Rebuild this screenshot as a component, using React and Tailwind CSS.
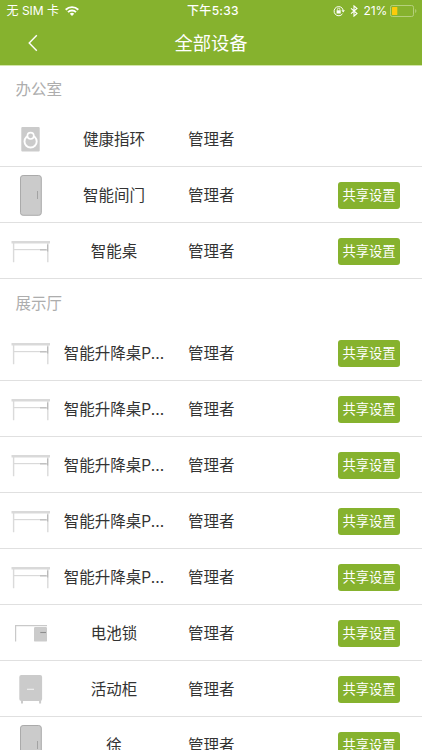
import React from "react";

function Art({ type }) {
  return (
    <svg viewBox="0 0 60 55" className="h-[55px] w-[60px] shrink-0 self-start" fill="none">
      {type === "ring" && (
        <>
          <rect x="21.3" y="16" width="18.4" height="24.5" rx="1" fill="#cbcbcb" />
          <circle cx="30.6" cy="30.4" r="6.1" stroke="#fff" strokeWidth="1.9" />
          <circle cx="30.6" cy="24.8" r="3.2" fill="#cbcbcb" stroke="#fff" strokeWidth="1.6" />
        </>
      )}
      {type === "door" && (
        <>
          <rect x="20.5" y="8.5" width="20.8" height="39.8" rx="2.6" fill="#cbcbcb" stroke="#aaa" />
          <path d="M37.5 24v8" stroke="#a3a3a3" />
        </>
      )}
      {type === "desk" && (
        <>
          <path d="M11.5 19.2H50" stroke="#d9d9d9" strokeWidth="2.6" />
          <path d="M13.6 20v19.2M47.8 20v19.2" stroke="#dadada" strokeWidth="1.4" />
          <path d="M14 26.6h32" stroke="#d9d9d9" strokeWidth="1.2" />
          <path d="M40 26.9h7M47.7 21.5v7" stroke="#b2b2b2" />
        </>
      )}
      {type === "lock" && (
        <>
          <path d="M15.6 36.6V20.6H47" stroke="#c9c9c9" strokeWidth="1.2" />
          <rect x="34" y="22" width="13" height="14.6" rx="1.2" fill="#cbcbcb" />
          <path d="M40.3 27.5H46" stroke="#8d8d8d" strokeWidth="1.1" />
        </>
      )}
      {type === "cabinet" && (
        <>
          <path d="M22 39v3.6M40.1 39v3.6" stroke="#cbcbcb" strokeWidth="2" />
          <rect x="19.3" y="14" width="22.8" height="26" rx="2" fill="#cbcbcb" />
          <path d="M27 28.3h7" stroke="#efefef" strokeWidth="1.2" />
        </>
      )}
    </svg>
  );
}

function Row({ type, name, share = true }) {
  return (
    <div className="flex h-14 items-center border-b border-[#e0e0e0]">
      <Art type={type} />
      <div className="w-[108px] pt-[2px] text-center whitespace-nowrap">{name}</div>
      <div className="ml-5 flex-1 pt-[2px]">管理者</div>
      {share && (
        <button className="mt-[2px] mr-[22px] flex h-[27px] w-[62px] items-center justify-center rounded-[3px] bg-[#86b22e] text-[13.3px] whitespace-nowrap text-white">
          共享设置
        </button>
      )}
    </div>
  );
}

function Group({ title, items, titleHeight }) {
  return (
    <section>
      <h2 className={`${titleHeight} flex items-center pt-[3px] pl-[15.5px] text-[#adadad]`}>{title}</h2>
      {items.map((item, i) => (
        <Row key={i} {...item} />
      ))}
    </section>
  );
}

function StatusBar() {
  return (
    <div className="grid h-[21px] grid-cols-3 items-center text-[12px] leading-none">
      <div className="flex items-center gap-[6px] pl-[6.5px]">
        <span className="whitespace-nowrap">无 SIM 卡</span>
        <svg viewBox="0 0 14 10" className="h-[10px] w-[14px]" fill="none" stroke="#fff" strokeWidth="1.9">
          <path d="M.7 3.7a9 9 0 0 1 12.6 0M3 6.1a5.7 5.7 0 0 1 8 0" />
          <path d="M7 10 4.8 7.8a3.1 3.1 0 0 1 4.4 0Z" fill="#fff" stroke="none" />
        </svg>
      </div>
      <div className="pl-[4px] text-center font-medium whitespace-nowrap tracking-[0.3px]">下午5:33</div>
      <div className="flex items-center justify-end pr-[5px]">
        <svg viewBox="0 0 12 12" className="mr-[5px] h-[12px] w-[12px]" fill="none" stroke="#fff">
          <path d="M9.5 8.8A4.6 4.6 0 1 1 10.2 5.2" />
          <path d="M8.4 5.3h3.5l-1.7 2.3Z" fill="#fff" stroke="none" />
          <rect x="3.6" y="5.3" width="4.1" height="3.2" fill="#fff" stroke="none" />
          <path d="M4.4 5.5V4.4a1.25 1.25 0 0 1 2.5 0v1.1" strokeWidth=".8" />
        </svg>
        <svg viewBox="0 0 8 12" className="mr-[6px] h-[12px] w-[8px]" fill="none" stroke="#fff" strokeWidth="1.1">
          <path d="m1 3.3 6 5.2-3 2.6V.9l3 2.6-6 5.2" />
        </svg>
        <span className="mr-[3px] tracking-[-0.2px]">21%</span>
        <svg viewBox="0 0 27 12" className="h-[12px] w-[27px]" fill="none">
          <rect x=".5" y=".5" width="23" height="11" rx="1.8" stroke="#b5d07c" />
          <rect x="2" y="2" width="5.3" height="8" rx=".5" fill="#fdcb0a" />
          <path d="M25.2 4v4q1.2-.5 1.2-2t-1.2-2Z" fill="#b5d07c" />
        </svg>
      </div>
    </div>
  );
}

const office = [
  { type: "ring", name: "健康指环", share: false },
  { type: "door", name: "智能间门" },
  { type: "desk", name: "智能桌" },
];

const hall = [
  { type: "desk", name: "智能升降桌P..." },
  { type: "desk", name: "智能升降桌P..." },
  { type: "desk", name: "智能升降桌P..." },
  { type: "desk", name: "智能升降桌P..." },
  { type: "desk", name: "智能升降桌P..." },
  { type: "lock", name: "电池锁" },
  { type: "cabinet", name: "活动柜" },
  { type: "door", name: "徐" },
];

export default function App() {
  return (
    <div className="h-[750px] w-[422px] overflow-hidden bg-white font-['Inter','Noto_Sans_CJK_SC',sans-serif] text-[15.5px] leading-none text-[#333]">
      <header className="h-[66px] border-b border-[#d3e5a9] bg-[#86b22e] text-white">
        <StatusBar />
        <div className="flex h-[44px] items-center">
          <svg viewBox="0 0 10 18" className="ml-7 h-[18px] w-[10px]" fill="none" stroke="#fff" strokeWidth="1.4">
            <path d="M8.8 1.2 1.2 9l7.6 7.8" />
          </svg>
          <h1 className="mr-[38px] flex-1 text-center text-[18.3px]">全部设备</h1>
        </div>
      </header>
      <main>
        <Group title="办公室" items={office} titleHeight="h-[45px]" />
        <Group title="展示厅" items={hall} titleHeight="h-[46px]" />
      </main>
    </div>
  );
}
